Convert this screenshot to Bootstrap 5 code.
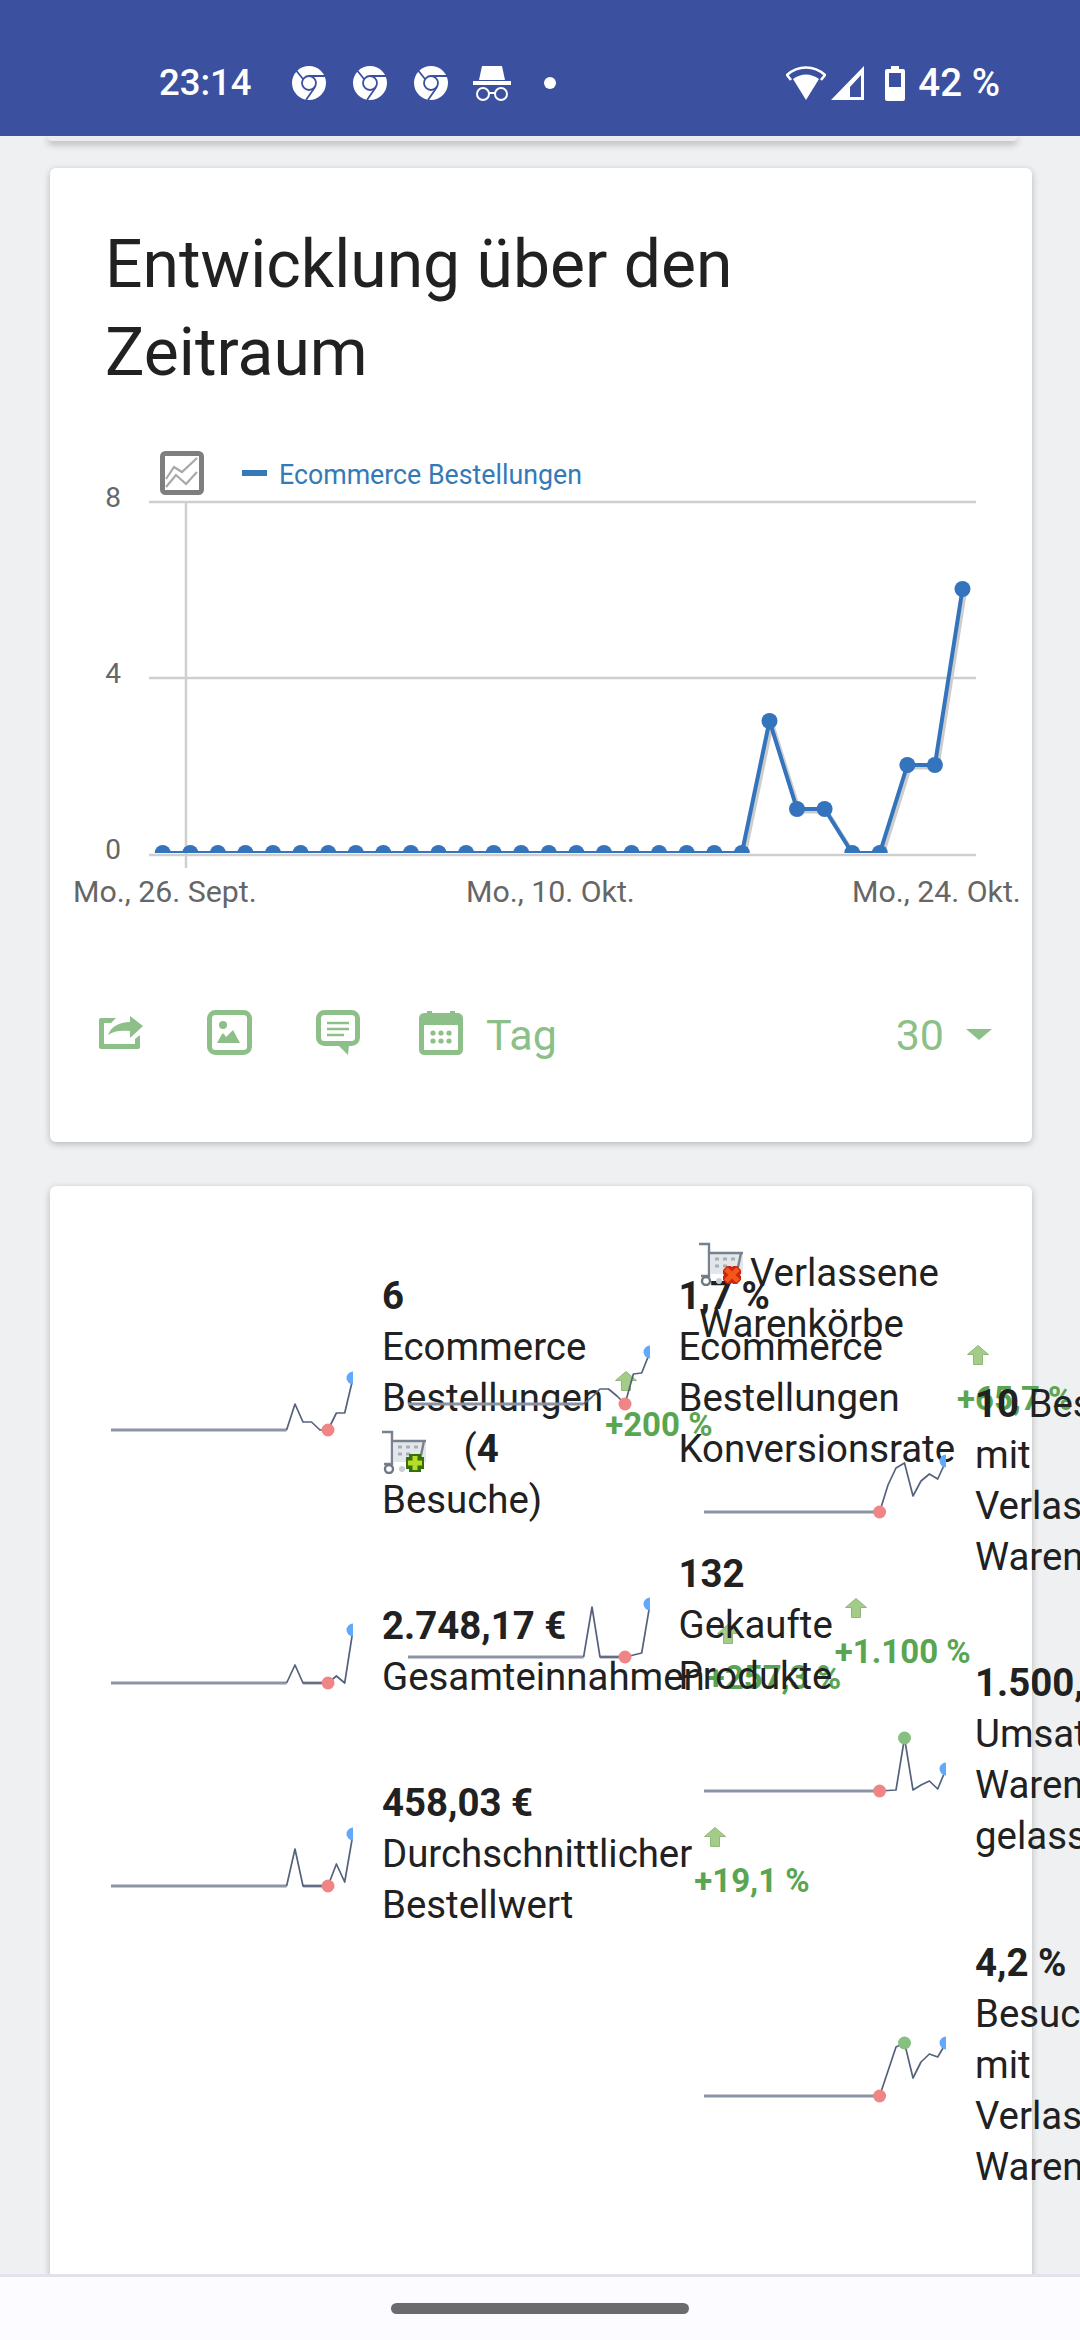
<!DOCTYPE html>
<html lang="de">
<head>
  <meta charset="UTF-8" />
  <meta name="viewport" content="width=device-width, initial-scale=1.0"/>
  <title>Ecommerce Übersicht</title>
  <link href="https://cdn.jsdelivr.net/npm/bootstrap@5.3.3/dist/css/bootstrap.min.css" rel="stylesheet" />

 <style>
  html, body { height: 100%; }
  body {
    height: 2340px;
    overflow: hidden;
    background: #eef0f2;
    font-family: Roboto, "Liberation Sans", sans-serif;
    color: #212121;
  }

  /* status bar */
  .status-bar {
    height: 136px;
    flex: none;
    padding: 30px 80px 0 159px;
    background: #3b509f;
    color: #fff;
    font-size: 36.5px;
    font-weight: 500;
    position: relative;
    z-index: 2;
  }
  .sb-first { margin-left: 40px; }
  .sb-chrome { margin-left: 27px; }
  .sb-spy { margin-left: 25px; }
  .sb-dot { margin-left: 33px; width: 12px; height: 12px; border-radius: 50%; background: #fff; }
  .sb-signal { margin-left: 5px; }
  .sb-battery { margin-left: 21px; }
  .sb-level { margin-left: 13px; font-size: 38.5px; }

  .page-body { min-height: 0; overflow: hidden; }
  .prev-card {
    height: 5px;
    width: 971px;
    margin: 0 0 27px 47px;
    background: #ececec;
    border-radius: 0 0 6px 6px;
    box-shadow: 0 3px 7px rgba(0,0,0,.3);
  }
  .sheet {
    width: 982px;
    margin-left: 50px;
    border: 0;
    border-radius: 6px;
    box-shadow: 0 2px 7px rgba(0,0,0,.24);
  }

  /* chart card */
  .chart-sheet { height: 974px; margin-bottom: 44px; }
  .chart-title {
    margin: 0;
    padding: 53px 55px 0;
    font-family: Roboto, sans-serif;
    font-size: 66px;
    font-weight: 400;
    line-height: 88.2px;
    color: #212121;
  }
  .chart-svg { display: block; margin-top: 43px; }
  .chart-svg text { font-family: Roboto, sans-serif; font-size: 30.3px; fill: #666; }
  .chart-svg .axis-num { font-size: 28px; }
  .chart-svg .legend-text { font-size: 28px; fill: #337ab7; }
  .chart-tools {
    margin-top: 90px;
    padding: 0 40px 0 49px;
    height: 45px;
    color: #8dbf88;
    font-size: 43px;
    font-weight: 400;
  }
  .chart-tools span { padding-top: 4px; }
  .tool-image { margin-left: 64px; }
  .tool-note { margin-left: 64px; }
  .tool-date { margin-left: 59px; }
  .tool-label { margin-left: 23px; }
  .tool-caret {
    margin: 4px 0 0 22px;
    border-left: 13px solid transparent;
    border-right: 13px solid transparent;
    border-top: 11px solid #8dbf88;
  }
  .chart-tools .tool-caret { padding-top: 0; }

  /* metrics card */
  .metrics-sheet { height: 1400px; padding: 47px 0 0 61px; overflow: visible; }
  .metric-col { flex: none; width: 296.5px; }
  .metric-row {
    width: max-content;
    padding: 37px 0;
    font-size: 38.4px;
    line-height: 51px;
    white-space: nowrap;
  }
  .metric-col-last .metric-row { padding-bottom: 38.5px; }
  .metric-row strong { font-weight: 700; }
  .spark { flex: none; display: block; margin-right: 29px; }
  .spark polyline { fill: none; stroke: #55627c; stroke-width: 1.7; stroke-linejoin: round; }
  .spark-flat { fill: none; stroke: #8b93a5; stroke-width: 3; }
  .dot-low { fill: #f08585; }
  .dot-high { fill: #86bf80; }
  .dot-last { fill: #62a8fb; }
  .metric-copy { margin-right: 2px; }
  .cart-inline { vertical-align: middle; margin-right: 28px; }
  .trend { padding-top: 25px; color: #5aa552; font-size: 33px; font-weight: 700; line-height: 51px; }
  .trend svg { display: block; margin: 0 0 8px 10px; }
  .cart-head {
    margin: 9px 0 -8.500px -5px;
    font-size: 38.4px;
    line-height: 51px;
    white-space: nowrap;
  }
  .cart-head svg { vertical-align: baseline; margin-right: 7px; }

  /* android nav bar */
  .nav-strip {
    height: 66px;
    flex: none;
    background: #fcfbff;
    border-top: 3px solid #e3e1ec;
    position: relative;
    z-index: 2;
  }
  .nav-pill { width: 298px; height: 11px; border-radius: 6px; background: #6b6b6d; }
</style>
</head>

<body class="d-flex flex-column">

  <svg width="0" height="0" class="position-absolute">
    <defs>
      <filter id="soft"><feGaussianBlur stdDeviation="0.5"/></filter>
      <symbol id="i-chrome" viewBox="0 0 34 34">
        <circle cx="17" cy="17" r="17" fill="#fff"/>
        <circle cx="17" cy="17" r="7" fill="#fff" stroke="#3b509f" stroke-width="1.8"/>
        <path d="M17 10H33M11 13L3 3M23 21L14 34" fill="none" stroke="#3b509f" stroke-width="1.8"/>
      </symbol>
      <symbol id="i-cart" viewBox="0 0 44 44">
        <g filter="url(#soft)">
          <rect x="12" y="12" width="32" height="20" fill="#e3e7ea"/>
          <path d="M16 17h4M24 17h4M32 17h4M16 24h4M24 24h4" stroke="#a5afb8" stroke-width="3" fill="none"/>
          <path d="M0 2H10V34H2M10 11H44M42 11L38 30" fill="none" stroke="#76828e" stroke-width="2.4"/>
          <circle cx="7" cy="39" r="4" fill="#fff" stroke="#6d7884" stroke-width="2.4"/>
          <circle cx="20" cy="39" r="3" fill="#c8ced4"/>
        </g>
      </symbol>
      <symbol id="i-up" viewBox="0 0 22 20">
        <path d="M11 0.5L21.5 9.5L15.5 9.5V19.5H6.500V9.500H0.500z" fill="#a5cb89" stroke="#8fb87a" stroke-width="1" filter="url(#soft)"/>
      </symbol>
    </defs>
  </svg>

  <div class="status-bar d-flex align-items-center">
    <span>23:14</span>
    <svg class="sb-first" width="34" height="34"><use href="#i-chrome"/></svg>
    <svg class="sb-chrome" width="34" height="34"><use href="#i-chrome"/></svg>
    <svg class="sb-chrome" width="34" height="34"><use href="#i-chrome"/></svg>
    <svg class="sb-spy" width="38" height="36" viewBox="0 0 38 36">
      <path d="M9 1H29L32 15H6z" fill="#fff"/>
      <rect x="0" y="16" width="38" height="4" fill="#fff"/>
      <circle cx="10" cy="29" r="6" fill="none" stroke="#fff" stroke-width="2"/>
      <circle cx="28" cy="29" r="6" fill="none" stroke="#fff" stroke-width="2"/>
      <path d="M16 28H22" stroke="#fff" stroke-width="2"/>
    </svg>
    <span class="sb-dot"></span>
    <span class="ms-auto d-flex align-items-center">
      <svg width="40" height="34" viewBox="0 0 40 34">
        <path d="M20 34L7 13C15 7 25 7 33 13z" fill="#fff"/>
        <path d="M5 14L1 9C12 -1 28 -1 39 9L35 14" fill="none" stroke="#fff" stroke-width="2.600"/>
      </svg>
      <svg class="sb-signal" width="33" height="34" viewBox="0 0 33 34">
        <path fill-rule="evenodd" d="M33 0V34H0zM30 9L19 21V31H30z" fill="#fff"/>
      </svg>
      <svg class="sb-battery" width="20" height="35" viewBox="0 0 20 35">
        <path fill-rule="evenodd" d="M6 0H14V3H18Q20 3 20 5V33Q20 35 18 35H2Q0 35 0 33V5Q0 3 2 3H6zM4 7V21H16V7z" fill="#fff"/>
      </svg>
      <span class="sb-level">42 %</span>
    </span>
  </div>

  <div class="page-body flex-grow-1">
    <div class="prev-card"></div>

    <div class="card sheet chart-sheet">
      <h2 class="chart-title">Entwicklung über den<br>Zeitraum</h2>
      <svg class="chart-svg" width="982" height="480" viewBox="50 440 982 480">
        <defs>
          <clipPath id="plot"><rect x="149" y="440" width="827" height="413"/></clipPath>
        </defs>
        <path d="M149 502H976M149 678H976M149 855H976M186 502V868" stroke="#cfcfcf" stroke-width="2.500" fill="none"/>
        <text class="axis-num" x="121" y="507" text-anchor="end">8</text>
        <text class="axis-num" x="121" y="683" text-anchor="end">4</text>
        <text class="axis-num" x="121" y="859" text-anchor="end">0</text>
        <text x="73" y="902">Mo., 26. Sept.</text>
        <text x="466" y="902">Mo., 10. Okt.</text>
        <text x="852" y="902">Mo., 24. Okt.</text>

        <g filter="url(#soft)">
          <rect x="162.500" y="453.500" width="39" height="39" rx="3" fill="#fff" stroke="#7f7f7f" stroke-width="5"/>
          <path d="M166 479L174 467L182 472L197 458M166 487L176 475L186 484L197 472" fill="none" stroke="#a8a8a8" stroke-width="2.200"/>
        </g>
        <rect x="242" y="470" width="25" height="6" fill="#337ab7"/>
        <text class="legend-text" x="279" y="484" textLength="303" lengthAdjust="spacingAndGlyphs">Ecommerce Bestellungen</text>

        <g clip-path="url(#plot)">
          <polyline transform="translate(2.500 2.500)" fill="none" stroke="#cdcdcd" stroke-width="4" points="741.900,853 769.500,721 797,809 824.600,809 852.200,853 879.800,853 907.400,765 934.900,765 962.500,589"/>
          <polyline fill="none" stroke="#3474bc" stroke-width="4" points="162.700,853 741.900,853 769.500,721 797,809 824.600,809 852.200,853 879.800,853 907.400,765 934.900,765 962.500,589"/>
          <g fill="#3474bc">
            <circle cx="162.700" cy="853" r="8"/><circle cx="190.300" cy="853" r="8"/><circle cx="217.900" cy="853" r="8"/>
            <circle cx="245.400" cy="853" r="8"/><circle cx="273" cy="853" r="8"/><circle cx="300.600" cy="853" r="8"/>
            <circle cx="328.200" cy="853" r="8"/><circle cx="355.800" cy="853" r="8"/><circle cx="383.300" cy="853" r="8"/>
            <circle cx="410.900" cy="853" r="8"/><circle cx="438.500" cy="853" r="8"/><circle cx="466.100" cy="853" r="8"/>
            <circle cx="493.700" cy="853" r="8"/><circle cx="521.200" cy="853" r="8"/><circle cx="548.800" cy="853" r="8"/>
            <circle cx="576.400" cy="853" r="8"/><circle cx="604" cy="853" r="8"/><circle cx="631.600" cy="853" r="8"/>
            <circle cx="659.100" cy="853" r="8"/><circle cx="686.700" cy="853" r="8"/><circle cx="714.300" cy="853" r="8"/>
            <circle cx="741.900" cy="853" r="8"/><circle cx="769.500" cy="721" r="8"/><circle cx="797" cy="809" r="8"/>
            <circle cx="824.600" cy="809" r="8"/><circle cx="852.200" cy="853" r="8"/><circle cx="879.800" cy="853" r="8"/>
            <circle cx="907.400" cy="765" r="8"/><circle cx="934.900" cy="765" r="8"/><circle cx="962.500" cy="589" r="8"/>
          </g>
        </g>
      </svg>

      <div class="chart-tools d-flex align-items-center">
        <svg width="44" height="33" viewBox="0 0 44 33" fill="#8dbf88">
          <path d="M2 2H17L12 7H5V28H36V23L41 19V31a2 2 0 0 1-2 2H2a2 2 0 0 1-2-2V4a2 2 0 0 1 2-2z"/>
          <path d="M31 0L44 10L31 22V15C22 14 14 15 9 19C12 11 20 6 31 6z"/>
        </svg>
        <svg class="tool-image" width="45" height="45" viewBox="0 0 45 45">
          <rect x="2.500" y="2.500" width="40" height="40" rx="6" fill="none" stroke="#8dbf88" stroke-width="5"/>
          <circle cx="16" cy="15" r="4" fill="#8dbf88"/>
          <path d="M10 33L15 24Q16 23 17 24L19 27L26 20L33 33z" fill="#8dbf88"/>
        </svg>
        <svg class="tool-note" width="44" height="45" viewBox="0 0 44 45">
          <rect x="2.500" y="2.500" width="39" height="31" rx="6" fill="none" stroke="#8dbf88" stroke-width="5"/>
          <path d="M22 35L32 45L33 35z" fill="#8dbf88"/>
          <path d="M11 13H33M11 19H33M11 25H28" stroke="#8dbf88" stroke-width="2.500"/>
        </svg>
        <svg class="tool-date" width="44" height="45" viewBox="0 0 44 45" fill="#8dbf88">
          <path d="M8 1H13V3H31V1H36V3H38Q44 3 44 9V39Q44 45 38 45H6Q0 45 0 39V9Q0 3 6 3H8z"/>
          <rect x="5" y="15" width="34" height="25" fill="#fff"/>
          <circle cx="14" cy="23" r="2.600"/><circle cx="22" cy="23" r="2.600"/><circle cx="30" cy="23" r="2.600"/>
          <circle cx="14" cy="31" r="2.600"/><circle cx="22" cy="31" r="2.600"/><circle cx="30" cy="31" r="2.600"/>
        </svg>
        <span class="tool-label">Tag</span>
        <span class="ms-auto">30</span>
        <span class="tool-caret"></span>
      </div>
    </div>

    <div class="card sheet metrics-sheet flex-row">

      <div class="metric-col">
        <div class="metric-row d-flex align-items-center">
          <svg class="spark" width="242" height="90" viewBox="0 0 242 90">
            <path class="spark-flat" d="M0 77H175.600"/>
            <polyline points="175.600,77 184,51 192,69 200.500,69 209,77 217,77 225.400,60 233.700,60 242,25"/>
            <circle class="dot-low" cx="217" cy="77" r="6.500"/><circle class="dot-last" cx="242" cy="25" r="6.500"/>
          </svg>
          <div class="metric-copy">
            <strong>6</strong><br>Ecommerce<br>Bestellungen<br>
            <svg class="cart-inline" width="44" height="44"><use href="#i-cart"/><g filter="url(#soft)"><path d="M33 24V42M24 33H42" stroke="#356f08" stroke-width="12"/><path d="M33 26V40M26 33H40" stroke="#b9dc2b" stroke-width="5"/></g></svg>
            (<strong>4</strong><br>Besuche)
          </div>
          <div class="trend">
            <svg width="22" height="20"><use href="#i-up"/></svg>
            +200 %
          </div>
        </div>

        <div class="metric-row d-flex align-items-center">
          <svg class="spark" width="242" height="90" viewBox="0 0 242 90">
            <path class="spark-flat" d="M0 77H175.600M192 77H217"/>
            <polyline points="175.600,77 184,59 192,77 217,77 225.400,70 233.700,77 242,24"/>
            <circle class="dot-low" cx="217" cy="77" r="6.500"/><circle class="dot-last" cx="242" cy="24" r="6.500"/>
          </svg>
          <div class="metric-copy"><strong>2.748,17 €</strong><br>Gesamteinnahmen</div>
          <div class="trend">
            <svg width="22" height="20"><use href="#i-up"/></svg>
            +257,3 %
          </div>
        </div>

        <div class="metric-row d-flex align-items-center">
          <svg class="spark" width="242" height="90" viewBox="0 0 242 90">
            <path class="spark-flat" d="M0 77H175.600M192 77H217"/>
            <polyline points="175.600,77 184,40 192,77 217,77 225.400,55 233.700,73 242,25"/>
            <circle class="dot-low" cx="217" cy="77" r="6.500"/><circle class="dot-last" cx="242" cy="25" r="6.500"/>
          </svg>
          <div class="metric-copy"><strong>458,03 €</strong><br>Durchschnittlicher<br>Bestellwert</div>
          <div class="trend">
            <svg width="22" height="20"><use href="#i-up"/></svg>
            +19,1 %
          </div>
        </div>
      </div>

      <div class="metric-col">
        <div class="metric-row d-flex align-items-center">
          <svg class="spark" width="242" height="90" viewBox="0 0 242 90">
            <path class="spark-flat" d="M0 77H175.600"/>
            <polyline points="175.600,77 184,70 192,62 200.500,62 209,69 217,77 225.400,47 233.700,46 242,25"/>
            <circle class="dot-low" cx="217" cy="77" r="6.500"/><circle class="dot-last" cx="242" cy="25" r="6.500"/>
          </svg>
          <div class="metric-copy"><strong>1,7 %</strong><br>Ecommerce<br>Bestellungen<br>Konversionsrate</div>
          <div class="trend">
            <svg width="22" height="20"><use href="#i-up"/></svg>
            +65,7 %
          </div>
        </div>

        <div class="metric-row d-flex align-items-center">
          <svg class="spark" width="242" height="90" viewBox="0 0 242 90">
            <path class="spark-flat" d="M0 77H175.600M192 77H217"/>
            <polyline points="175.600,77 184,27 192,77 217,77 225.400,75 233.700,73 242,24"/>
            <circle class="dot-low" cx="217" cy="77" r="6.500"/><circle class="dot-last" cx="242" cy="24" r="6.500"/>
          </svg>
          <div class="metric-copy"><strong>132</strong><br>Gekaufte<br>Produkte</div>
          <div class="trend">
            <svg width="22" height="20"><use href="#i-up"/></svg>
            +1.100 %
          </div>
        </div>
      </div>

      <div class="metric-col metric-col-last">
        <div class="cart-head">
          <svg width="44" height="44"><use href="#i-cart"/><g filter="url(#soft)"><path d="M26 26L40 40M40 26L26 40" stroke="#c8280c" stroke-width="11"/><path d="M27 27L39 39M39 27L27 39" stroke="#f4561e" stroke-width="5"/></g></svg>Verlassene<br>Warenkörbe
        </div>

        <div class="metric-row d-flex align-items-center">
          <svg class="spark" width="242" height="90" viewBox="0 0 242 90">
            <path class="spark-flat" d="M0 77H175.600"/>
            <polyline points="175.600,77 184,50 192,33 200.500,28 209,61 217,46 225.400,39 233.700,44 242,26"/>
            <circle class="dot-low" cx="175.600" cy="77" r="6.500"/><circle class="dot-last" cx="242" cy="26" r="6.500"/>
          </svg>
          <div class="metric-copy"><strong>10</strong> Besuche<br>mit<br>Verlassene<br>Warenkörbe</div>
        </div>

        <div class="metric-row d-flex align-items-center">
          <svg class="spark" width="242" height="90" viewBox="0 0 242 90">
            <path class="spark-flat" d="M0 77H175.600"/>
            <polyline points="175.600,77 192,76 200.500,24 209,76 217,71 225.400,67 233.700,75 242,55"/>
            <circle class="dot-low" cx="175.600" cy="77" r="6.500"/><circle class="dot-high" cx="200.500" cy="24" r="6.500"/><circle class="dot-last" cx="242" cy="55" r="6.500"/>
          </svg>
          <div class="metric-copy"><strong>1.500,00 €</strong><br>Umsatz<br>Warenkorb<br>gelassen</div>
        </div>

        <div class="metric-row d-flex align-items-center">
          <svg class="spark" width="242" height="90" viewBox="0 0 242 90">
            <path class="spark-flat" d="M0 77H175.600"/>
            <polyline points="175.600,77 184,52 192,28 200.500,24 209,59 217,43 225.400,35 233.700,38 242,24"/>
            <circle class="dot-low" cx="175.600" cy="77" r="6.500"/><circle class="dot-high" cx="200.500" cy="24" r="6.500"/><circle class="dot-last" cx="242" cy="24" r="6.500"/>
          </svg>
          <div class="metric-copy"><strong>4,2 %</strong><br>Besuche<br>mit<br>Verlassene<br>Warenkörbe</div>
        </div>
      </div>
    </div>
  </div>

  <div class="nav-strip d-flex align-items-center justify-content-center">
    <div class="nav-pill"></div>
  </div>

  <script src="https://cdn.jsdelivr.net/npm/bootstrap@5.3.3/dist/js/bootstrap.bundle.min.js"></script>
</body>
</html>
